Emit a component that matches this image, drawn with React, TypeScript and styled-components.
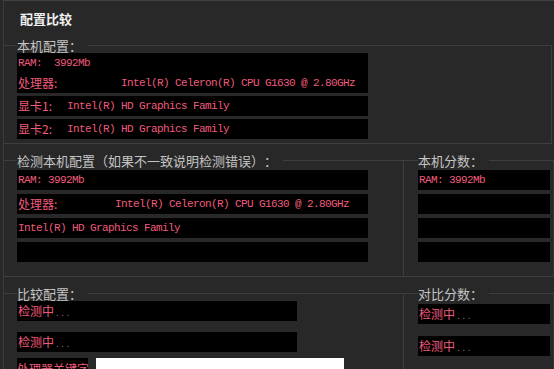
import styled, { createGlobalStyle } from 'styled-components';

const GlobalStyle = createGlobalStyle`
  html, body {
    margin: 0;
    padding: 0;
    background: #282828;
  }
  body {
    font-family: "Noto Sans CJK SC", "Noto Sans", sans-serif;
    text-spacing-trim: space-all;
  }
`;

const Window = styled.div`
  box-sizing: border-box;
  width: 551px;
  height: 369px;
  margin-left: 3px;
  border-top: 1px solid #414141;
  border-left: 1px solid #3c3c3c;
  overflow: hidden;
`;

const Title = styled.div`
  height: 37px;
  padding: 0 0 2px 16px;
  box-sizing: border-box;
  display: flex;
  align-items: center;
  font-size: 13px;
  font-weight: 700;
  color: #f0f0f0;
`;

const Group = styled.fieldset<{ $w: number; $pl?: number; $pt?: number; $pb?: number; $divider?: boolean }>`
  box-sizing: border-box;
  margin: 0;
  min-width: 0;
  width: ${(p) => p.$w}px;
  border: 1px solid #3e3e3e;
  border-left: none;
  border-right-color: ${(p) => (p.$divider ? '#3e3e3e' : '#363636')};
  padding: ${(p) => p.$pt ?? 0}px 0 ${(p) => p.$pb ?? 4}px ${(p) => p.$pl ?? 13}px;
  display: flex;
  flex-direction: column;
`;

const Legend = styled.legend`
  padding: 0 6px 0 0;
  font-size: 13px;
  line-height: 15px;
  color: #c4c4c4;
  white-space: nowrap;
`;

const Stack = styled.div<{ $gap: number }>`
  display: flex;
  flex-direction: column;
  gap: ${(p) => p.$gap}px;
`;

const Row = styled.div`
  display: grid;
  grid-template-columns: 400px 150px;
  margin-top: 9px;
`;

const Field = styled.div<{ $w: number; $h?: number; $mt?: number }>`
  box-sizing: border-box;
  width: ${(p) => p.$w}px;
  height: ${(p) => p.$h ?? 20}px;
  margin-top: ${(p) => p.$mt ?? 0}px;
  padding-left: 1px;
  background: #000;
  color: #f05b7c;
  font-family: "Liberation Mono", monospace;
  font-size: 11px;
  letter-spacing: -0.6px;
  line-height: 20px;
  white-space: pre;
  overflow: hidden;
`;

const Key = styled.span<{ $w?: number }>`
  display: inline-block;
  width: ${(p) => (p.$w ? `${p.$w}px` : 'auto')};
  font-family: "Noto Sans CJK SC", sans-serif;
  font-size: 12px;
  letter-spacing: 0;
  vertical-align: top;
`;

const Dots = styled.span`
  font-family: "Liberation Sans", sans-serif;
  font-size: 10px;
  letter-spacing: 2.5px;
  margin-left: 2px;
  color: #9a6f78;
`;

const KeywordRow = styled.div`
  display: flex;
  gap: 8px;
  margin-top: 6px;
`;

const KeywordLabel = styled.div`
  width: 71px;
  height: 20px;
  background: #000;
  color: #f05b7c;
  font-size: 12px;
  line-height: 22px;
  white-space: nowrap;
  overflow: hidden;
`;

const KeywordInput = styled.div`
  width: 248px;
  height: 20px;
  background: #fff;
`;

const Detecting = () => (
  <Key>
    检测中<Dots>...</Dots>
  </Key>
);

export default function App() {
  return (
    <>
      <GlobalStyle />
      <Window>
        <Title>配置比较</Title>

        <Group $w={548} $divider>
          <Legend>本机配置：</Legend>
          <Stack $gap={3}>
            <Field $w={351} $h={40}>
              {'RAM:  3992Mb\n'}
              <Key $w={103}>处理器:</Key>
              {'Intel(R) Celeron(R) CPU G1630 @ 2.80GHz'}
            </Field>
            <Field $w={351}>
              <Key $w={49}>显卡1:</Key>
              {'Intel(R) HD Graphics Family'}
            </Field>
            <Field $w={351}>
              <Key $w={49}>显卡2:</Key>
              {'Intel(R) HD Graphics Family'}
            </Field>
          </Stack>
        </Group>

        <Row>
          <Group $w={400} $pt={2} $pb={14} $divider>
            <Legend>检测本机配置（如果不一致说明检测错误）：</Legend>
            <Stack $gap={4}>
              <Field $w={351}>{'RAM: 3992Mb'}</Field>
              <Field $w={351}>
                <Key $w={97}>处理器:</Key>
                {'Intel(R) Celeron(R) CPU G1630 @ 2.80GHz'}
              </Field>
              <Field $w={351}>{'Intel(R) HD Graphics Family'}</Field>
              <Field $w={351} />
            </Stack>
          </Group>
          <Group $w={150} $pl={14} $pt={2} $pb={14}>
            <Legend>本机分数：</Legend>
            <Stack $gap={4}>
              <Field $w={132}>{'RAM: 3992Mb'}</Field>
              <Field $w={132} />
              <Field $w={132} />
              <Field $w={132} />
            </Stack>
          </Group>
        </Row>

        <Row>
          <Group $w={400} $pb={20} $divider>
            <Legend>比较配置：</Legend>
            <Field $w={280}>
              <Detecting />
            </Field>
            <Field $w={280} $mt={11}>
              <Detecting />
            </Field>
            <KeywordRow>
              <KeywordLabel>处理器关键字</KeywordLabel>
              <KeywordInput />
            </KeywordRow>
          </Group>
          <Group $w={150} $pl={14} $pt={3} $pb={20}>
            <Legend>对比分数：</Legend>
            <Field $w={132}>
              <Detecting />
            </Field>
            <Field $w={132} $mt={12}>
              <Detecting />
            </Field>
          </Group>
        </Row>
      </Window>
    </>
  );
}
